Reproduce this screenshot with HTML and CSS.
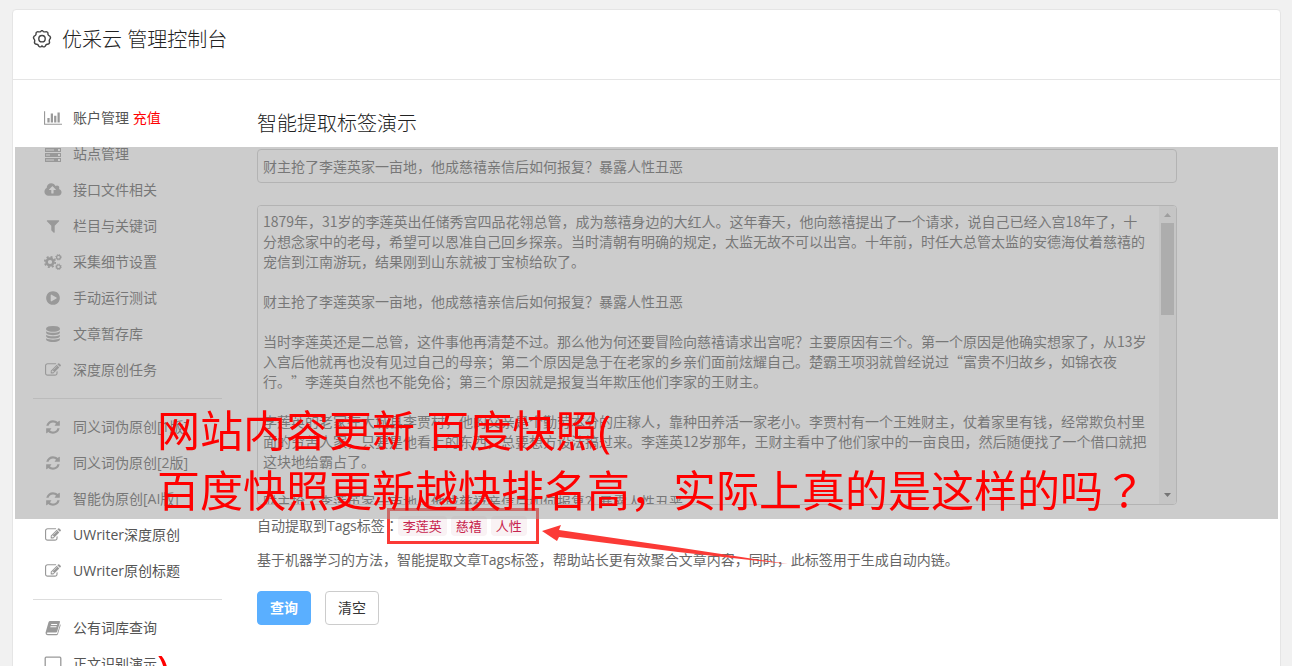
FILE: index.html
```html
<!DOCTYPE html>
<html lang="zh-CN">
<head>
    <meta charset="UTF-8">
    <meta name="viewport" content="width=device-width, initial-scale=1.0">
    <title>优采云 管理控制台</title>
    <link rel="stylesheet" href="styles.css">
</head>
<body>
    <!-- Icon set -->
    <svg class="icon-set" width="0" height="0" aria-hidden="true">
        <symbol id="i-chart" viewBox="0 0 2048 1792"><path d="M640 896v512h-256v-512h256zm384-512v1024h-256v-1024h256zm1024 1152v128h-2048v-1536h128v1408h1920zm-640-896v768h-256v-768h256zm384-384v1152h-256v-1152h256z"/></symbol>
        <symbol id="i-server" viewBox="0 0 18 16"><path fill-rule="evenodd" d="M1 2h16v4H1zM2 3.500h8v1H2zM14 3h2v2h-2zM1 7h16v4H1zM2 8.500h4v1H2zM14 8h2v2h-2zM1 12h16v4H1zM2 13.500h8v1H2zM14 13h2v2h-2z"/></symbol>
        <symbol id="i-cloud" viewBox="0 0 1920 1792"><path d="M1280 864q0-14-9-23l-352-352q-9-9-23-9t-23 9l-351 351q-10 12-10 24 0 14 9 23t23 9h224v352q0 13 9.500 22.500t22.500 9.500h192q13 0 22.500-9.500t9.500-22.500v-352h224q13 0 22.500-9.500t9.500-22.500zm640 288q0 159-112.500 271.500t-271.500 112.500h-1088q-185 0-316.500-131.500t-131.500-316.500q0-130 70-240t188-165q-2-30-2-43 0-212 150-362t362-150q156 0 285.500 87t188.500 231q71-62 166-62 106 0 181 75t75 181q0 76-41 138 130 31 213.500 135.500t83.500 238.500z"/></symbol>
        <symbol id="i-filter" viewBox="0 0 1792 1792"><path d="M1595 295q17 41-14 70l-493 493v742q0 42-39 59-13 5-25 5-27 0-45-19l-256-256q-19-19-19-45v-486l-493-493q-31-29-14-70 17-39 59-39h1280q42 0 59 39z"/></symbol>
        <symbol id="i-cogs" viewBox="0 0 18 16">
            <g fill="none" stroke="currentColor">
                <circle cx="6" cy="8" r="3.400" stroke-width="2.600"/>
                <circle cx="6" cy="8" r="5.200" stroke-width="1.800" stroke-dasharray="2.040 2.040"/>
                <circle cx="14.500" cy="3.200" r="1.900" stroke-width="1.300"/>
                <circle cx="14.500" cy="3.200" r="2.800" stroke-width="1" stroke-dasharray="1.100 1.100"/>
                <circle cx="14.500" cy="12.800" r="1.900" stroke-width="1.300"/>
                <circle cx="14.500" cy="12.800" r="2.800" stroke-width="1" stroke-dasharray="1.100 1.100"/>
            </g>
        </symbol>
        <symbol id="i-play" viewBox="0 0 1792 1792"><path d="M896 128q209 0 385.500 103t279.500 279.500 103 385.500-103 385.500-279.500 279.500-385.500 103-385.500-103-279.500-279.500-103-385.500 103-385.500 279.500-279.500 385.500-103zm384 823q32-18 32-55t-32-55l-544-320q-31-19-64-1-32 19-32 56v640q0 37 32 56 16 8 32 8 17 0 32-9z"/></symbol>
        <symbol id="i-database" viewBox="0 0 1792 1792"><path d="M896 768q237 0 443-43t325-127v170q0 69-103 128t-280 93.500-385 34.500-385-34.500-280-93.500-103-128v-170q119 84 325 127t443 43zm0 768q237 0 443-43t325-127v170q0 69-103 128t-280 93.500-385 34.500-385-34.500-280-93.500-103-128v-170q119 84 325 127t443 43zm0-384q237 0 443-43t325-127v170q0 69-103 128t-280 93.500-385 34.500-385-34.500-280-93.500-103-128v-170q119 84 325 127t443 43zm0-1152q208 0 385 34.500t280 93.500 103 128v128q0 69-103 128t-280 93.500-385 34.500-385-34.500-280-93.500-103-128v-128q0-69 103-128t280-93.500 385-34.500z"/></symbol>
        <symbol id="i-edit" viewBox="0 0 1792 1792"><path d="M888 1184l116-116-152-152-116 116v56h96v96h56zm440-720q-16-16-33 1l-350 350q-17 17-1 33t33-1l350-350q17-17 1-33zm80 594v190q0 119-84.500 203.500t-203.500 84.500h-832q-119 0-203.500-84.500t-84.500-203.500v-832q0-119 84.500-203.500t203.500-84.500h832q63 0 117 25 15 7 18 23 3 17-9 29l-49 49q-14 14-32 8-23-6-45-6h-832q-66 0-113 47t-47 113v832q0 66 47 113t113 47h832q66 0 113-47t47-113v-126q0-13 9-22l64-64q15-15 35-7t20 29zm-96-738l288 288-672 672h-288v-288zm444 132l-92 92-288-288 92-92q28-28 68-28t68 28l152 152q28 28 28 68t-28 68z"/></symbol>
        <symbol id="i-refresh" viewBox="0 0 1792 1792"><path d="M1639 1056q0 5-1 7-64 268-268 434.500t-478 166.500q-146 0-282.500-55t-243.500-157l-129 129q-19 19-45 19t-45-19-19-45v-448q0-26 19-45t45-19h448q26 0 45 19t19 45-19 45l-137 137q71 66 161 102t187 36q134 0 250-65t186-179q11-17 53-117 8-23 30-23h192q13 0 22.500 9.500t9.500 22.500zm25-800v448q0 26-19 45t-45 19h-448q-26 0-45-19t-19-45 19-45l138-138q-148-137-349-137-134 0-250 65t-186 179q-11 17-53 117-8 23-30 23h-199q-13 0-22.500-9.500t-9.500-22.500v-7q65-268 270-434.500t480-166.500q146 0 284 55.500t245 156.500l130-129q19-19 45-19t45 19 19 45z"/></symbol>
        <symbol id="i-book" viewBox="0 0 16 16"><path fill-rule="evenodd" d="M5.200 1h9q1 0 .8 1l-2.800 9.500q-.3 1-1.300 1H2.600q-.8 0-.8.700 0 .8 1.200.8h8.600q.5 0 .7-.6L15 4.200q.8.400.6 1.200L13 14q-.4 1.200-1.600 1.200H2.600Q.4 15.200.5 12.800L3.500 2.200Q3.900 1 5.200 1zM6.300 4l-.3 1h6l.3-1zM5.600 6.300l-.3 1h6l.3-1z"/></symbol>
        <symbol id="i-laptop" viewBox="0 0 18 16"><path fill="none" stroke="currentColor" stroke-width="1.300" d="M2.200 1.200h13.600q1 0 1 1v8.600q0 1-1 1H2.200q-1 0-1-1V2.200q0-1 1-1z"/><path d="M0 13.500h18q0 2-2 2H2q-2 0-2-2z"/></symbol>
    </svg>

    <div class="panel">
        <div class="panel-header">
            <svg class="gear" viewBox="0 0 20 20" width="20" height="20" aria-hidden="true">
                <path d="M8.600 1.600 Q10 -.4 11.400 1.600 Q12.700 2.200 14.200 1.600 Q16.300 1.900 15.900 4.200 Q16.200 5.600 17.800 6.200 Q19.300 8 17.600 9.500 Q16.900 10.700 17.600 12.200 Q17.300 14.500 15.100 14.300 Q13.700 14.600 13.200 16.200 Q11.300 17.700 10 16 Q8.700 17.700 6.800 16.200 Q6.300 14.600 4.900 14.300 Q2.700 14.500 2.400 12.200 Q3.100 10.700 2.400 9.500 Q.7 8 2.200 6.200 Q3.800 5.600 4.100 4.200 Q3.700 1.900 5.800 1.600 Q7.300 2.200 8.600 1.600z"/>
                <circle cx="10" cy="8.700" r="3.200"/>
            </svg>
            <h1>优采云 管理控制台</h1>
        </div>
        <div class="panel-body">
            <!-- Sidebar -->
            <nav class="sidebar">
                <ul>
                    <li><a href="#"><svg width="18" height="16"><use href="#i-chart"/></svg><span>账户管理 <em>充值</em></span></a></li>
                    <li><a href="#"><svg width="18" height="16"><use href="#i-server"/></svg><span>站点管理</span></a></li>
                    <li><a href="#"><svg width="18" height="16"><use href="#i-cloud"/></svg><span>接口文件相关</span></a></li>
                    <li><a href="#"><svg width="16" height="16"><use href="#i-filter"/></svg><span>栏目与关键词</span></a></li>
                    <li><a href="#"><svg width="18" height="16"><use href="#i-cogs"/></svg><span>采集细节设置</span></a></li>
                    <li><a href="#"><svg width="16" height="16"><use href="#i-play"/></svg><span>手动运行测试</span></a></li>
                    <li><a href="#"><svg width="16" height="16"><use href="#i-database"/></svg><span>文章暂存库</span></a></li>
                    <li><a href="#"><svg width="16" height="16"><use href="#i-edit"/></svg><span>深度原创任务</span></a></li>
                </ul>
                <ul>
                    <li><a href="#"><svg width="16" height="16"><use href="#i-refresh"/></svg><span>同义词伪原创[1版]</span></a></li>
                    <li><a href="#"><svg width="16" height="16"><use href="#i-refresh"/></svg><span>同义词伪原创[2版]</span></a></li>
                    <li><a href="#"><svg width="16" height="16"><use href="#i-refresh"/></svg><span>智能伪原创[AI版]</span></a></li>
                    <li><a href="#"><svg width="16" height="16"><use href="#i-edit"/></svg><span>UWriter深度原创</span></a></li>
                    <li><a href="#"><svg width="16" height="16"><use href="#i-edit"/></svg><span>UWriter原创标题</span></a></li>
                </ul>
                <ul>
                    <li><a href="#"><svg width="16" height="16"><use href="#i-book"/></svg><span>公有词库查询</span></a></li>
                    <li><a href="#"><svg width="18" height="16"><use href="#i-laptop"/></svg><span>正文识别演示</span></a></li>
                </ul>
            </nav>

            <!-- Tag extraction demo -->
            <form class="content">
                <h2>智能提取标签演示</h2>
                <input class="field" type="text" aria-label="标题" value="财主抢了李莲英家一亩地，他成慈禧亲信后如何报复？暴露人性丑恶">
                <div class="article-box">
                    <textarea class="field article" aria-label="正文">1879年，31岁的李莲英出任储秀宫四品花翎总管，成为慈禧身边的大红人。这年春天，他向慈禧提出了一个请求，说自己已经入宫18年了，十分想念家中的老母，希望可以恩准自己回乡探亲。当时清朝有明确的规定，太监无故不可以出宫。十年前，时任大总管太监的安德海仗着慈禧的宠信到江南游玩，结果刚到山东就被丁宝桢给砍了。

财主抢了李莲英家一亩地，他成慈禧亲信后如何报复？暴露人性丑恶

当时李莲英还是二总管，这件事他再清楚不过。那么他为何还要冒险向慈禧请求出宫呢？主要原因有三个。第一个原因是他确实想家了，从13岁入宫后他就再也没有见过自己的母亲；第二个原因是急于在老家的乡亲们面前炫耀自己。楚霸王项羽就曾经说过“富贵不归故乡，如锦衣夜行。”李莲英自然也不能免俗；第三个原因就是报复当年欺压他们李家的王财主。

李莲英的老家在大城县李贾村，他的父亲是个勤劳本分的庄稼人，靠种田养活一家老小。李贾村有一个王姓财主，仗着家里有钱，经常欺负村里面的穷苦人家，只要是他看上的东西，总要想方设法搞过来。李莲英12岁那年，王财主看中了他们家中的一亩良田，然后随便找了一个借口就把这块地给霸占了。

财主抢了李莲英家一亩地，他成慈禧亲信后如何报复？暴露人性丑恶</textarea>
                    <div class="scrollbar" aria-hidden="true">
                        <svg viewBox="0 0 7 4" width="7" height="4"><path fill="#a3a3a3" d="M0 4L3.500 0L7 4z"/></svg>
                        <div class="scroll-thumb"></div>
                        <svg viewBox="0 0 7 4" width="7" height="4"><path fill="#505050" d="M0 0L3.500 4L7 0z"/></svg>
                    </div>
                </div>
                <div class="tags">
                    <span>自动提取到Tags标签<span class="wide-mark" lang="ja">：</span></span>
                    <div class="tag-list">
                        <code>李莲英</code>
                        <code>慈禧</code>
                        <code>人性</code>
                        <svg class="arrow" viewBox="0 0 248 44" width="248" height="44" aria-hidden="true">
                            <path d="M0 8L19 2L17 7L140 25L246 41L136 29L17 14L15 18z"/>
                        </svg>
                    </div>
                </div>
                <p class="hint">基于机器学习的方法，智能提取文章Tags标签，帮助站长更有效聚合文章内容，同时，此标签用于生成自动内链。</p>
                <div class="actions">
                    <button class="btn btn-primary" type="button">查询</button>
                    <button class="btn" type="reset">清空</button>
                </div>
            </form>
        </div>
    </div>

    <!-- Caption laid over the page -->
    <div class="caption">
        <p>网站内容更新 百度快照(<br>百度快照更新越快排名高，实际上真的是这样的吗<span class="wide-mark" lang="ja">？</span><br><br><br>)</p>
    </div>
</body>
</html>
```
FILE: styles.css
```css
* {
    box-sizing: border-box;
}
body {
    position: relative;
    height: 100vh;
    margin: 0;
    padding: 9px 11px 0 12px;
    overflow: hidden;
    background-color: #f1f1f1;
    color: #666;
    font-family: "Open Sans", "Noto Sans CJK SC", sans-serif;
    font-size: 14px;
    line-height: 20px;
}
h1, h2 {
    margin: 0;
    color: #222;
    font-size: 20px;
    font-weight: 300;
}
.icon-set {
    position: absolute;
}
/* Full-width marks centred in their cell */
.wide-mark {
    font-family: "Noto Sans CJK JP", sans-serif;
    line-height: 1;
}
.panel {
    background-color: #fff;
    border: 1px solid #e5e5e5;
    border-radius: 4px;
}
.panel-header {
    display: flex;
    align-items: center;
    gap: 10px;
    height: 70px;
    padding: 0 19px 9px;
    border-bottom: 1px solid #e5e5e5;
}
.gear {
    fill: none;
    stroke: #444;
    stroke-width: 1.4;
}
.panel-body {
    display: flex;
    gap: 35px;
    padding: 20px 103px 20px 20px;
}

/* Sidebar */
.sidebar {
    flex: none;
    width: 189px;
}
.sidebar ul {
    margin: 0;
    padding: 0;
    list-style: none;
}
.sidebar ul + ul {
    margin-top: 10px;
    padding-top: 10px;
    border-top: 1px solid #ddd;
}
.sidebar a {
    display: grid;
    grid-template-columns: 20px 1fr;
    gap: 10px;
    align-items: center;
    height: 36px;
    padding-left: 10px;
    color: #555;
    text-decoration: none;
}
.sidebar svg {
    justify-self: center;
    color: #999;
    fill: #999;
}
.sidebar em {
    color: #f00;
    font-style: normal;
}

/* Content */
.content {
    flex: 1;
    min-width: 0;
    padding-top: 9px;
}
.content h2 {
    margin-bottom: 10px;
    line-height: 30px;
}
.field {
    display: block;
    width: 100%;
    height: 34px;
    padding: 6px 5px;
    border: 1px solid #ccc;
    border-radius: 4px;
    background-color: #fff;
    color: #555;
    font: inherit;
}
.article-box {
    position: relative;
    margin-top: 22px;
}
.article {
    height: 300px;
    padding: 5px 27px 5px 5px;
    font-family: "Noto Sans CJK SC", sans-serif;
    text-spacing-trim: space-all;
    resize: none;
    scrollbar-width: none;
}
.scrollbar {
    position: absolute;
    top: 1px;
    right: 1px;
    bottom: 1px;
    display: flex;
    flex-direction: column;
    align-items: center;
    width: 17px;
    padding: 7px 0;
    border-radius: 0 3px 3px 0;
    background-color: #f1f1f1;
}
.scroll-thumb {
    width: 13px;
    height: 92px;
    margin: 6px 0 auto;
    background-color: #c1c1c1;
}
.tags {
    display: flex;
    align-items: center;
    height: 34px;
    margin-top: 4px;
}
.tag-list {
    position: relative;
    display: flex;
    gap: 4px;
    margin-left: -12px;
    padding: 5px 9px 5px 8px;
    border: 3px solid #fb3a36;
}
.tags code {
    padding: 0 5px;
    border-radius: 4px;
    background-color: #f9f2f4;
    color: #c7254e;
    font-family: inherit;
    font-size: 13px;
}
.arrow {
    position: absolute;
    top: 12px;
    left: calc(100% + 6px);
    fill: #fb3a36;
}
.hint {
    margin: 7px 0 21px;
}
.actions {
    display: flex;
    gap: 14px;
}
.btn {
    height: 34px;
    padding: 0 12px;
    border: 1px solid #ccc;
    border-radius: 4px;
    background-color: #fff;
    color: #333;
    font: inherit;
    cursor: pointer;
}
.btn-primary {
    border-color: #5aafff;
    background-color: #5aafff;
    color: #fff;
    font-weight: bold;
}

/* Caption */
.caption {
    position: absolute;
    top: 147px;
    right: 14px;
    left: 15px;
    height: 372px;
    padding: 254px 0 0 142px;
    background-color: rgba(153, 153, 153, 0.5);
    color: #f00;
    font-size: 43px;
    line-height: 60px;
    white-space: nowrap;
}
.caption p {
    margin: 0;
}
```
